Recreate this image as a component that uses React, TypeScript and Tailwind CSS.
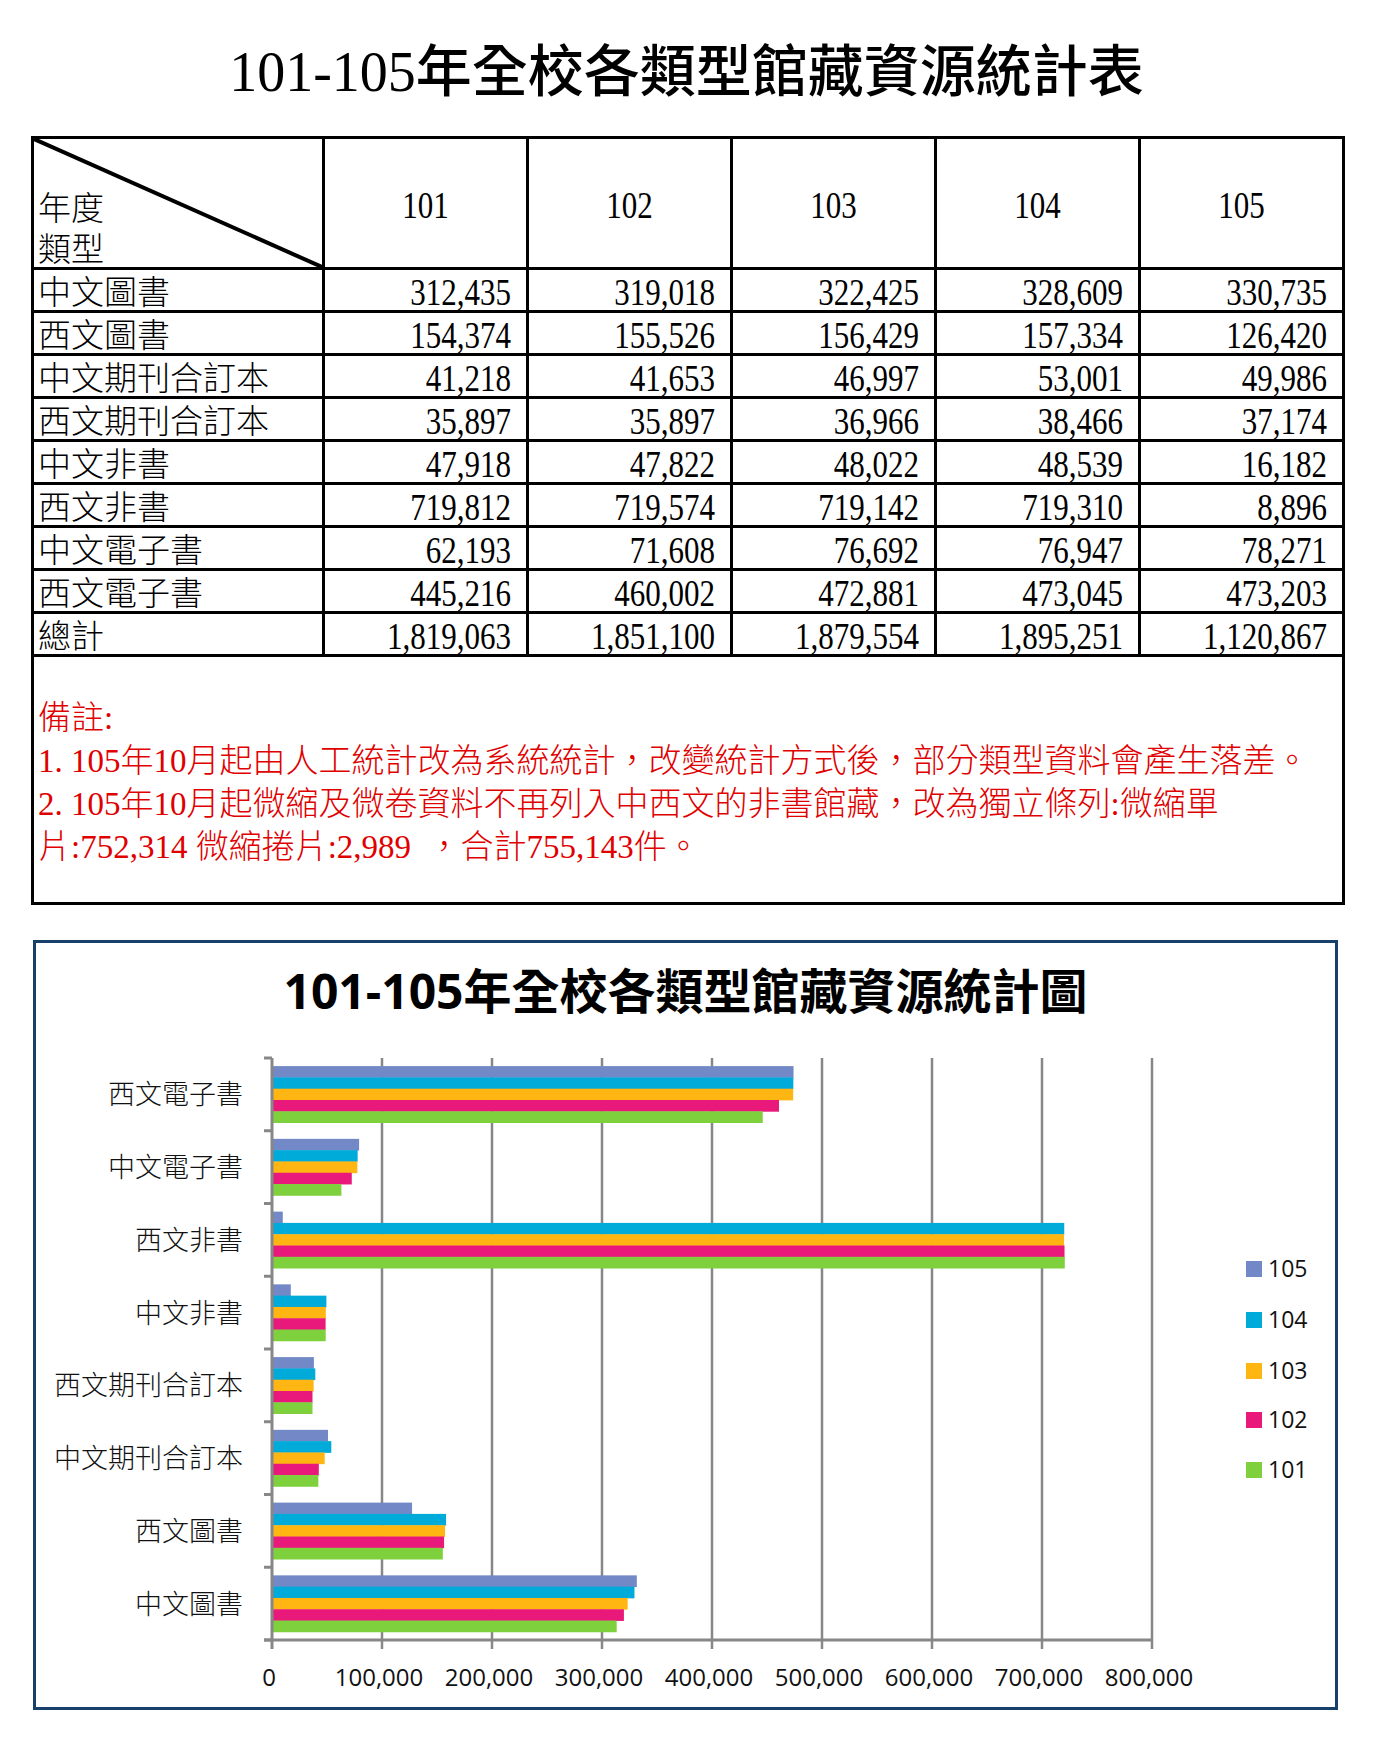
const YEARS = ['101', '102', '103', '104', '105'];

type Row = { name: string; values: number[] };

const ROWS: Row[] = [
  { name: '中文圖書', values: [312435, 319018, 322425, 328609, 330735] },
  { name: '西文圖書', values: [154374, 155526, 156429, 157334, 126420] },
  { name: '中文期刊合訂本', values: [41218, 41653, 46997, 53001, 49986] },
  { name: '西文期刊合訂本', values: [35897, 35897, 36966, 38466, 37174] },
  { name: '中文非書', values: [47918, 47822, 48022, 48539, 16182] },
  { name: '西文非書', values: [719812, 719574, 719142, 719310, 8896] },
  { name: '中文電子書', values: [62193, 71608, 76692, 76947, 78271] },
  { name: '西文電子書', values: [445216, 460002, 472881, 473045, 473203] },
];

const TOTALS = [1819063, 1851100, 1879554, 1895251, 1120867];

const NOTES = [
  '備註:',
  '1. 105年10月起由人工統計改為系統統計，改變統計方式後，部分類型資料會產生落差。',
  '2. 105年10月起微縮及微卷資料不再列入中西文的非書館藏，改為獨立條列:微縮單',
  '片:752,314 微縮捲片:2,989\u00a0\u00a0，合計755,143件。',
];

// bar colours, keyed by year
const COLORS: Record<string, string> = {
  '105': '#7389c7',
  '104': '#00aad9',
  '103': '#ffb612',
  '102': '#e8197a',
  '101': '#7ed13c',
};

const fmt = (n: number) => n.toLocaleString('en-US');

const SERIF = "font-['Liberation_Serif','Noto_Sans_CJK_TC',serif]";

// latin runs keep the serif at normal weight, CJK runs stay light
function Mixed({ text }: { text: string }) {
  const parts = text.split(/([\x00-\x7F\u00a0]+)/).filter(Boolean);
  return (
    <>
      {parts.map((p, i) =>
        /^[\x00-\x7F\u00a0]+$/.test(p) ? (
          <span key={i} className="font-normal">{p}</span>
        ) : (
          <span key={i}>{p}</span>
        ),
      )}
    </>
  );
}

function NumCell({ children }: { children: React.ReactNode }) {
  return (
    <div className="bg-white h-[40px] flex items-center justify-end pr-[15px] pt-[2px] text-[31px] leading-none">
      <span className="inline-block scale-y-125">{children}</span>
    </div>
  );
}

function LabelCell({ children }: { children: React.ReactNode }) {
  return (
    <div className="bg-white h-[40px] flex items-center pl-[4px] pt-[6px] text-[33px] leading-none font-light whitespace-nowrap">
      {children}
    </div>
  );
}

function StatsTable() {
  return (
    <div className={`ml-[31px] w-fit grid grid-cols-[288px_repeat(5,201px)] gap-[3px] bg-black p-[3px] text-black ${SERIF}`}>
      {/* header row */}
      <div className="bg-white h-[128px] relative flex flex-col justify-end pl-[4px] text-[33px] leading-[41px] font-light">
        <svg className="absolute inset-0" width="288" height="128" viewBox="0 0 288 128">
          <line x1="0" y1="0" x2="288" y2="128" stroke="black" strokeWidth="4" />
        </svg>
        <div className="flex flex-col translate-y-[4px]">
          <span>年度</span>
          <span>類型</span>
        </div>
      </div>
      {YEARS.map((y) => (
        <div key={y} className="bg-white h-[128px] flex items-center justify-center pt-[3px] text-[31px] leading-none">
          <span className="inline-block scale-y-125">{y}</span>
        </div>
      ))}

      {ROWS.map((r) => (
        <div key={r.name} className="contents">
          <LabelCell>{r.name}</LabelCell>
          {r.values.map((v, i) => (
            <NumCell key={i}>{fmt(v)}</NumCell>
          ))}
        </div>
      ))}

      <LabelCell>總計</LabelCell>
      {TOTALS.map((v, i) => (
        <NumCell key={i}>{fmt(v)}</NumCell>
      ))}

      {/* notes */}
      <div className="col-span-6 bg-white h-[245px] pt-[40px] pl-[4px] text-[33px] leading-[43px] text-[#e00000] font-light whitespace-nowrap">
        {NOTES.map((n) => (
          <p key={n}>
            <Mixed text={n} />
          </p>
        ))}
      </div>
    </div>
  );
}

// chart geometry, in page pixels
const X0 = 272;
const PX = 880 / 800000;
const TOP = 1058;
const BOTTOM = 1640;
const CAT = (BOTTOM - TOP) / 8;
const BAR_H = 11.3;
const GRID = '#878787';

function BarChart() {
  const cats = [...ROWS].reverse();
  const order = [4, 3, 2, 1, 0];
  const legendY = [1269, 1320, 1371, 1420, 1470];

  return (
    <svg width="1299" height="677" viewBox="36 1030 1299 677" className="block">
      {/* gridlines */}
      {[1, 2, 3, 4, 5, 6, 7, 8].map((k) => (
        <line key={k} x1={X0 + k * 110} y1={TOP} x2={X0 + k * 110} y2={BOTTOM + 9} stroke={GRID} strokeWidth="2.5" />
      ))}

      {/* bars */}
      {cats.map((c, ci) => {
        const top = TOP + ci * CAT + 8.1;
        return order.map((vi, j) => (
          <rect
            key={`${ci}-${j}`}
            x={X0 + 1}
            y={top + j * BAR_H}
            width={c.values[vi] * PX}
            height={BAR_H + 0.4}
            fill={COLORS[YEARS[vi]]}
          />
        ));
      })}

      {/* axes + ticks */}
      <line x1={X0} y1={TOP} x2={X0} y2={BOTTOM + 9} stroke={GRID} strokeWidth="3" />
      <line x1={X0 - 8} y1={BOTTOM} x2={X0 + 880} y2={BOTTOM} stroke={GRID} strokeWidth="3" />
      {[0, 1, 2, 3, 4, 5, 6, 7, 8].map((i) => (
        <line key={i} x1={X0 - 8} y1={TOP + i * CAT} x2={X0} y2={TOP + i * CAT} stroke={GRID} strokeWidth="3" />
      ))}

      {/* category labels */}
      {cats.map((c, ci) => (
        <text
          key={c.name}
          x="243"
          y={TOP + (ci + 0.5) * CAT + 10}
          textAnchor="end"
          fontSize="27"
          fontWeight="300"
          fill="#111"
          className="font-['Noto_Sans_CJK_TC',sans-serif]"
        >
          {c.name}
        </text>
      ))}

      {/* x labels */}
      {[0, 1, 2, 3, 4, 5, 6, 7, 8].map((k) => (
        <text
          key={k}
          x={X0 + k * 110 - 3}
          y="1686"
          textAnchor="middle"
          fontSize="24"
          fill="#111"
          className="font-['Open_Sans',sans-serif]"
        >
          {fmt(k * 100000)}
        </text>
      ))}

      {/* legend */}
      {['105', '104', '103', '102', '101'].map((y, i) => (
        <g key={y}>
          <rect x="1246" y={legendY[i] - 8} width="16" height="16" fill={COLORS[y]} />
          <text x="1268" y={legendY[i] + 8} fontSize="23" fill="#111" className="font-['Open_Sans',sans-serif]">
            {y}
          </text>
        </g>
      ))}
    </svg>
  );
}

export default function App() {
  return (
    <div className="w-[1373px] min-h-[1741px] bg-white">
      <h1 className={`h-[136px] flex items-center justify-center pt-[8px] text-[56px] leading-none font-medium text-black ${SERIF}`}>
        101-105年全校各類型館藏資源統計表
      </h1>

      <StatsTable />

      <div className="ml-[33px] mt-[35px] w-[1305px] h-[770px] border-[3px] border-[#17406b] bg-white">
        <h2 className="h-[87px] flex items-center justify-center pt-[9px] text-[48px] leading-none font-bold text-black font-['Open_Sans','Noto_Sans_CJK_TC',sans-serif]">
          101-105年全校各類型館藏資源統計圖
        </h2>
        <BarChart />
      </div>
    </div>
  );
}
